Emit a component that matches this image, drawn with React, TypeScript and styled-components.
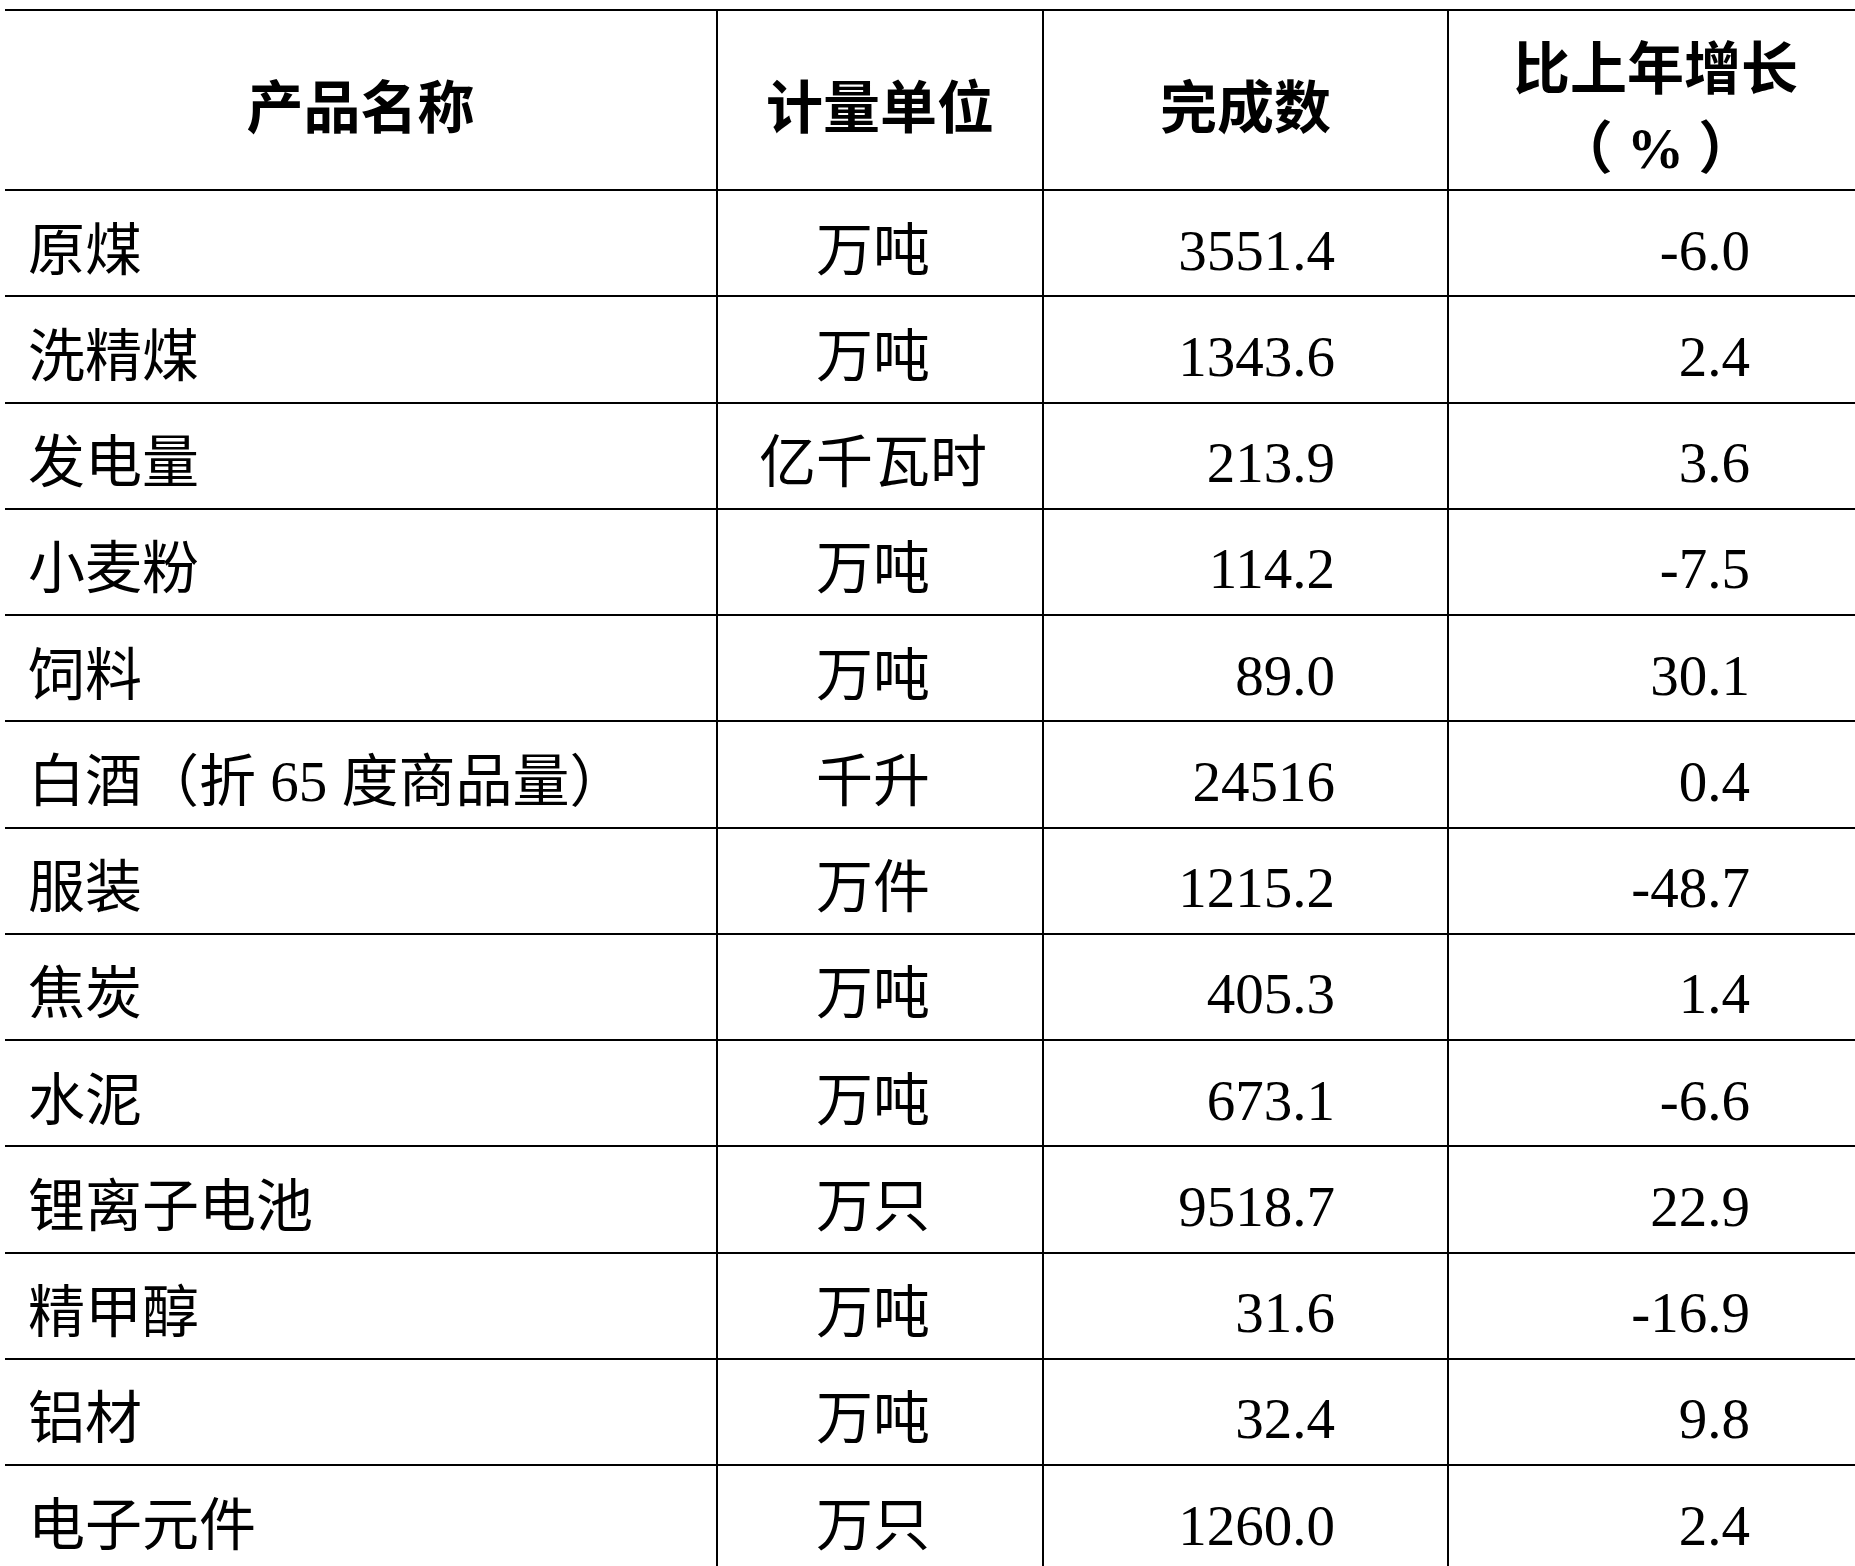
import React from "react"
import styled, { createGlobalStyle } from "styled-components"

type Align = "left" | "center" | "right"

interface Row {
	name: string
	unit: string
	amount: string
	growth: string
}

const rows: Row[] = [
	{ name: "原煤", unit: "万吨", amount: "3551.4", growth: "-6.0" },
	{ name: "洗精煤", unit: "万吨", amount: "1343.6", growth: "2.4" },
	{ name: "发电量", unit: "亿千瓦时", amount: "213.9", growth: "3.6" },
	{ name: "小麦粉", unit: "万吨", amount: "114.2", growth: "-7.5" },
	{ name: "饲料", unit: "万吨", amount: "89.0", growth: "30.1" },
	{ name: "白酒（折 65 度商品量）", unit: "千升", amount: "24516", growth: "0.4" },
	{ name: "服装", unit: "万件", amount: "1215.2", growth: "-48.7" },
	{ name: "焦炭", unit: "万吨", amount: "405.3", growth: "1.4" },
	{ name: "水泥", unit: "万吨", amount: "673.1", growth: "-6.6" },
	{ name: "锂离子电池", unit: "万只", amount: "9518.7", growth: "22.9" },
	{ name: "精甲醇", unit: "万吨", amount: "31.6", growth: "-16.9" },
	{ name: "铝材", unit: "万吨", amount: "32.4", growth: "9.8" },
	{ name: "电子元件", unit: "万只", amount: "1260.0", growth: "2.4" },
]

export default function App() {
	return (
		<>
			<GlobalStyle />
			<Table>
				<HeadCell>产品名称</HeadCell>
				<HeadCell>计量单位</HeadCell>
				<HeadCell>完成数</HeadCell>
				<HeadCell $last>
					比上年增长
					<br />
					（ % ）
				</HeadCell>
				{rows.map((r) => (
					<React.Fragment key={r.name}>
						<Cell $align="left">{r.name}</Cell>
						<Cell $align="center">{r.unit}</Cell>
						<Cell $align="right">{r.amount}</Cell>
						<Cell $align="right" $last>
							{r.growth}
						</Cell>
					</React.Fragment>
				))}
			</Table>
		</>
	)
}

const GlobalStyle = createGlobalStyle`
	html, body {
		margin: 0;
		padding: 0;
		background: #fff;
		overflow: hidden;
	}
`

const Table = styled.div`
	display: grid;
	grid-template-columns: 713px 326px 405px 413px;
	grid-template-rows: 180px repeat(13, 106.25px);
	width: 1857px;
	margin: 9px 0 0 5px;
	border-top: 2px solid #000;
	color: #000;
	font-family: "Liberation Serif", "Noto Sans CJK SC", serif;
	font-size: 57px;
	text-spacing-trim: space-all;
`

const HeadCell = styled.div<{ $last?: boolean }>`
	box-sizing: border-box;
	display: flex;
	align-items: center;
	justify-content: center;
	text-align: center;
	padding-top: 17px;
	line-height: 79px;
	font-weight: 700;
	white-space: pre;
	border-bottom: 2px solid #000;
	border-right: ${(p) => (p.$last ? "none" : "2px solid #000")};
`

const justify: Record<Align, string> = {
	left: "flex-start",
	center: "center",
	right: "flex-end",
}

const pad: Record<Align, string> = {
	left: "0 0 0 23px",
	center: "0 14px 0 0",
	right: "0 112px 0 0",
}

const Cell = styled.div<{ $align: Align; $last?: boolean }>`
	box-sizing: border-box;
	display: flex;
	align-items: center;
	justify-content: ${(p) => justify[p.$align]};
	padding: ${(p) => pad[p.$align]};
	padding-top: 14px;
	line-height: 57px;
	white-space: pre;
	border-bottom: 2px solid #000;
	border-right: ${(p) => (p.$last ? "none" : "2px solid #000")};
`
